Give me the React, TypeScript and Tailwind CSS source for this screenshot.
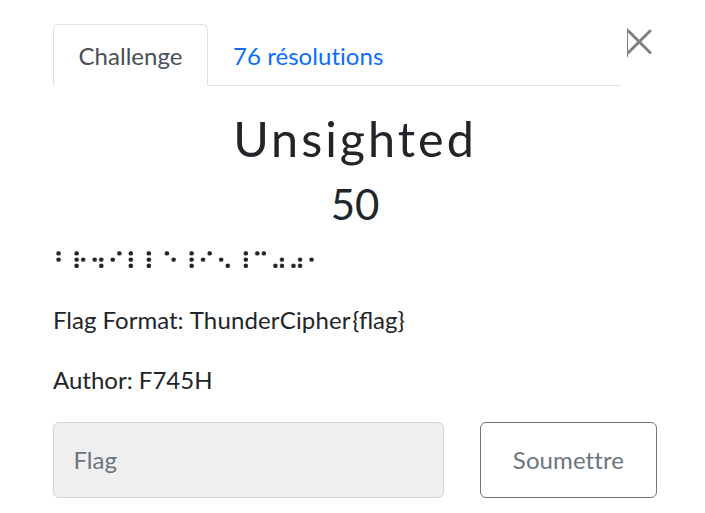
export default function App() {
  return (
    <main className="h-[513px] w-[705px] overflow-hidden bg-white pl-[53px] pt-6 font-['Lato','DejaVu_Sans',sans-serif] text-[24px] leading-9 text-[#212529]">
      <header className="flex h-[62px] [font-variant-ligatures:none]">
        <nav className="flex w-[568px] tracking-[0.05px]">
          <button className="w-[155px] rounded-t-[6px] border border-b-0 border-[#dee2e6] pt-px text-[#495057]">
            Challenge
          </button>
          <button className="flex-1 border-b border-[#dee2e6] pl-[25px] pt-[2px] text-left text-[#0d6efd]">
            76 résolutions
          </button>
        </nav>
        <button aria-label="Close" className="ml-[6px] mt-1 h-[29px] w-[26px]">
          <svg width="26" height="29" viewBox="0 0 26 29" fill="none" stroke="#808080">
            <path d="M.5 0v29" />
            <path d="M1.5 3 23 24.5M23 3 1.5 24.5" strokeWidth="3" strokeLinecap="round" />
          </svg>
        </button>
      </header>
      <section className="w-[604px]">
        <h2 className="mt-[22px] h-[60px] text-center text-[48.5px] leading-[60px] tracking-[3px]">Unsighted</h2>
        <h3 className="mt-[10px] h-[52px] text-center text-[42px] leading-[52px]">50</h3>
        <svg
          className="mt-[12px] block h-9 w-[300px] overflow-visible font-['DejaVu_Sans',sans-serif] text-[24px] tracking-[0.5px]"
          fill="url(#dots)"
          stroke="url(#dots)"
          strokeWidth="2.4"
        >
          {/* Rounds the square dots of the braille glyphs */}
          <pattern id="dots" width="18.07" height="36" patternUnits="userSpaceOnUse">
            <g fill="#212529" stroke="none">
              <circle cx="5.5" cy="11.4" r="2.2" />
              <circle cx="5.5" cy="17.6" r="2.2" />
              <circle cx="5.5" cy="23.8" r="2.2" />
              <circle cx="12" cy="11.4" r="2.2" />
              <circle cx="12" cy="17.6" r="2.2" />
              <circle cx="12" cy="23.8" r="2.2" />
            </g>
          </pattern>
          <text x="0.2" y="28">⠃⠗⠲⠊⠇⠇⠑⠸⠊⠢⠸⠉⠴⠴⠂</text>
        </svg>
        <p className="mt-6">Flag Format: <span className="tracking-[0.15px]">ThunderCipher</span><span className="ml-[1.5px] inline-block">{'{flag}'}</span></p>
        <p className="mt-6">Author: F745H</p>
        <form className="mt-6 flex gap-9 [font-variant-ligatures:none]">
          <input
            placeholder="Flag"
            className="h-[76px] w-[391px] rounded-[6px] border border-[#ced4da] bg-[#efefef] pb-[2px] pl-[19.5px] pr-5 placeholder:text-[#6c757d]"
          />
          <button type="button" className="h-[76px] w-[177px] rounded-[6px] border border-[#6c757d] tracking-[0.1px] text-[#6c757d]">
            Soumettre
          </button>
        </form>
      </section>
    </main>
  );
}
